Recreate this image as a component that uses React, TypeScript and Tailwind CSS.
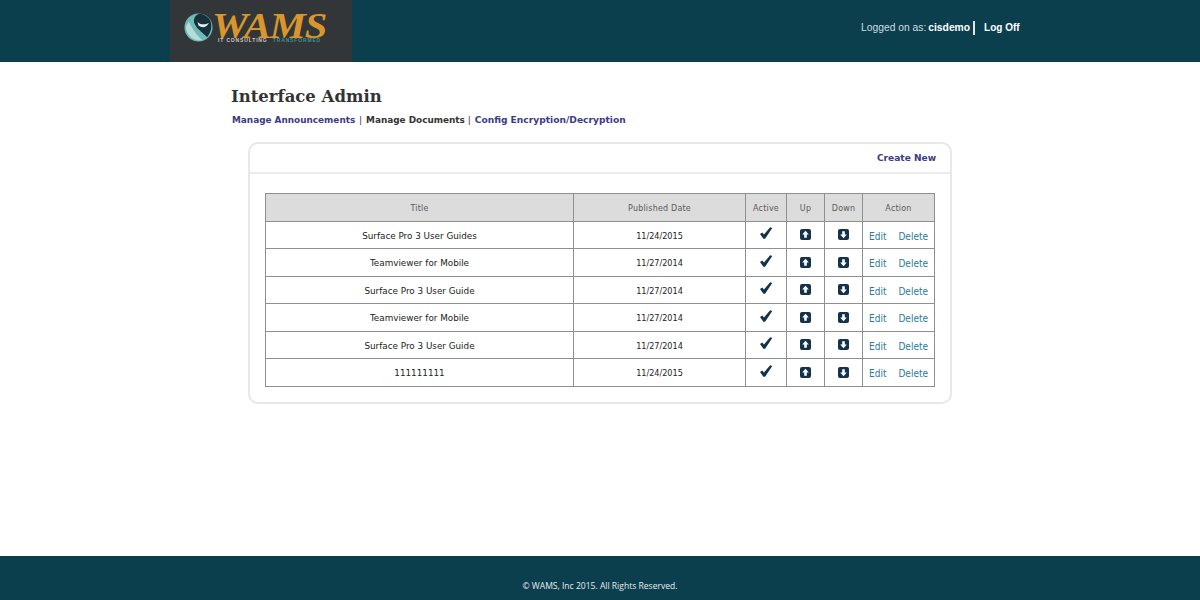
const rows = [
  ["Surface Pro 3 User Guides", "11/24/2015"],
  ["Teamviewer for Mobile", "11/27/2014"],
  ["Surface Pro 3 User Guide", "11/27/2014"],
  ["Teamviewer for Mobile", "11/27/2014"],
  ["Surface Pro 3 User Guide", "11/27/2014"],
  ["111111111", "11/24/2015"],
];

function Check() {
  return (
    <svg width="14" height="12" viewBox="0 0 14 13" className="inline-block align-middle mb-[3px]">
      <path d="M0.5 7.5 L3 6 L4.8 8 L11.5 0.3 L13.8 1 L6 12.6 L4.2 12.6 Z" fill="#14324a" />
    </svg>
  );
}

function Arrow({ up }: { up?: boolean }) {
  return (
    <svg width="11" height="11" viewBox="0 0 11 11" className="inline-block align-middle">
      <rect width="11" height="11" rx="2" fill="#14324a" />
      {up ? (
        <path d="M5.5 1.8 L8.8 5.4 H6.8 V8.8 H4.2 V5.4 H2.2 Z" fill="#fff" />
      ) : (
        <path d="M5.5 9.2 L8.8 5.6 H6.8 V2.2 H4.2 V5.6 H2.2 Z" fill="#fff" />
      )}
    </svg>
  );
}

function Logo() {
  return (
    <div className="w-[182px] h-[62px] bg-[#333638] flex flex-col items-start pl-[14px] pt-[12px] overflow-hidden">
      <div className="flex items-center h-[30px]">
        <svg width="29" height="29" viewBox="0 0 30 30" className="shrink-0">
          <circle cx="15" cy="15" r="14.5" fill="#6fbab6" />
          <path d="M15 1 C10 3 9 9 12 13 C14 17 20 21 24 25 C29 19 30 10 25 5 C22 2 18 0 15 1 Z" fill="#17313a" />
          <path d="M14 9 C17 13 22 12 26 10 C23 15 19 16 15 13 Z" fill="#dfeceb" />
          <path d="M5 9 C8 15 12 22 19 28 C10 30 2 23 2 14 Z" fill="#b5dcd8" />
        </svg>
        <span className="font-['Liberation_Serif',serif] italic font-bold text-[#d9962c] text-[35px] leading-[22px] ml-[-1px] tracking-[-1px] scale-x-[1.16] origin-left">
          WAMS
        </span>
      </div>
      <div className="font-['Liberation_Sans',sans-serif] font-bold text-[5px] leading-[3px] ml-[34px] mt-[-3.5px] tracking-[0.85px] text-[#c9c9c9] whitespace-nowrap">
        IT CONSULTING <span className="text-[#3f8f8c] ml-[3px]">TRANSFORMED</span>
      </div>
    </div>
  );
}

export default function App() {
  const cell = "border border-[#8f8f8f] text-center p-0";
  const head = "border border-[#8f8f8f] text-center p-0 pt-[3px] font-normal text-[8px] text-[#5b5b5b] tracking-[0.2px]";
  return (
    <div className="h-[600px] flex flex-col bg-white font-['DejaVu_Sans',sans-serif]">
      <header className="h-[62px] bg-[#0c3f4e] flex items-center shrink-0">
        <div className="ml-[170px]">
          <Logo />
        </div>
        <div className="ml-[509px] mb-[7px] flex items-center font-['Liberation_Sans',sans-serif] text-[10.3px] whitespace-nowrap">
          <span className="text-[#cfdde0]">Logged on as:</span>
          <span className="text-white font-bold ml-[2px]">cisdemo</span>
          <span className="w-[2px] h-[14px] bg-[#dfe8ea] ml-[3px]" />
          <span className="text-white font-bold ml-[9px] text-[10px]">Log Off</span>
        </div>
      </header>

      <main className="flex-1">
        <div className="ml-[231px] mt-[23px]">
          <h1 className="font-['DejaVu_Serif',serif] font-bold text-[16.5px] leading-[24px] text-[#333333]">
            Interface Admin
          </h1>
          <div className="mt-[4px] ml-[1px] text-[9.1px] leading-[14px] font-bold text-[#333] whitespace-nowrap">
            <span className="text-[#3b3a86] text-[8.9px]">Manage Announcements</span>
            <span className="font-normal mx-[1px]"> | </span>
            <span className="text-[8.9px]">Manage Documents</span>
            <span className="font-normal mr-[1px]"> | </span>
            <span className="text-[#3b3a86] text-[9.15px]">Config Encryption/Decryption</span>
          </div>
        </div>

        <section className="ml-[248px] mt-[15px] w-[704px] h-[262px] border-2 border-[#e8e8e8] rounded-[10px]">
          <div className="h-[30px] border-b-2 border-[#ececec] flex items-center justify-end pr-[14px] pt-[1px] text-[9.05px] font-bold text-[#3b3a86]">
            Create New
          </div>
          <div className="pt-[19px] pl-[15px]">
            <table className="w-[669px] table-fixed border-collapse text-[8.8px] text-[#222]">
              <colgroup>
                <col className="w-[308px]" />
                <col className="w-[172px]" />
                <col className="w-[41px]" />
                <col className="w-[38px]" />
                <col className="w-[38px]" />
                <col className="w-[72px]" />
              </colgroup>
              <thead>
                <tr className="h-[27.5px] bg-[#dcdcdc]">
                  {["Title", "Published Date", "Active", "Up", "Down", "Action"].map((h) => (
                    <th key={h} className={head}>
                      {h}
                    </th>
                  ))}
                </tr>
              </thead>
              <tbody>
                {rows.map((r, i) => (
                  <tr key={i} className="h-[27.5px]">
                    <td className={cell + " pt-[3px]"}>{r[0]}</td>
                    <td className={cell + " pt-[3px] text-[9px] font-['DejaVu_Sans_Condensed','DejaVu_Sans',sans-serif]"}>{r[1]}</td>
                    <td className={cell}>
                      <Check />
                    </td>
                    <td className={cell}>
                      <Arrow up />
                    </td>
                    <td className={cell}>
                      <Arrow />
                    </td>
                    <td className={cell + " pt-[3px] text-[10px] text-[#2a7a9e] whitespace-nowrap font-['DejaVu_Sans_Condensed','DejaVu_Sans',sans-serif]"}>
                      <span>Edit</span>
                      <span className="ml-[12px]">Delete</span>
                    </td>
                  </tr>
                ))}
              </tbody>
            </table>
          </div>
        </section>
      </main>

      <footer className="h-[44px] bg-[#0c3f4e] shrink-0 flex items-center justify-center pt-[17px] font-['Open_Sans',sans-serif] text-[8.55px] text-[#e4ecee]">
        © WAMS, Inc 2015. All Rights Reserved.
      </footer>
    </div>
  );
}
